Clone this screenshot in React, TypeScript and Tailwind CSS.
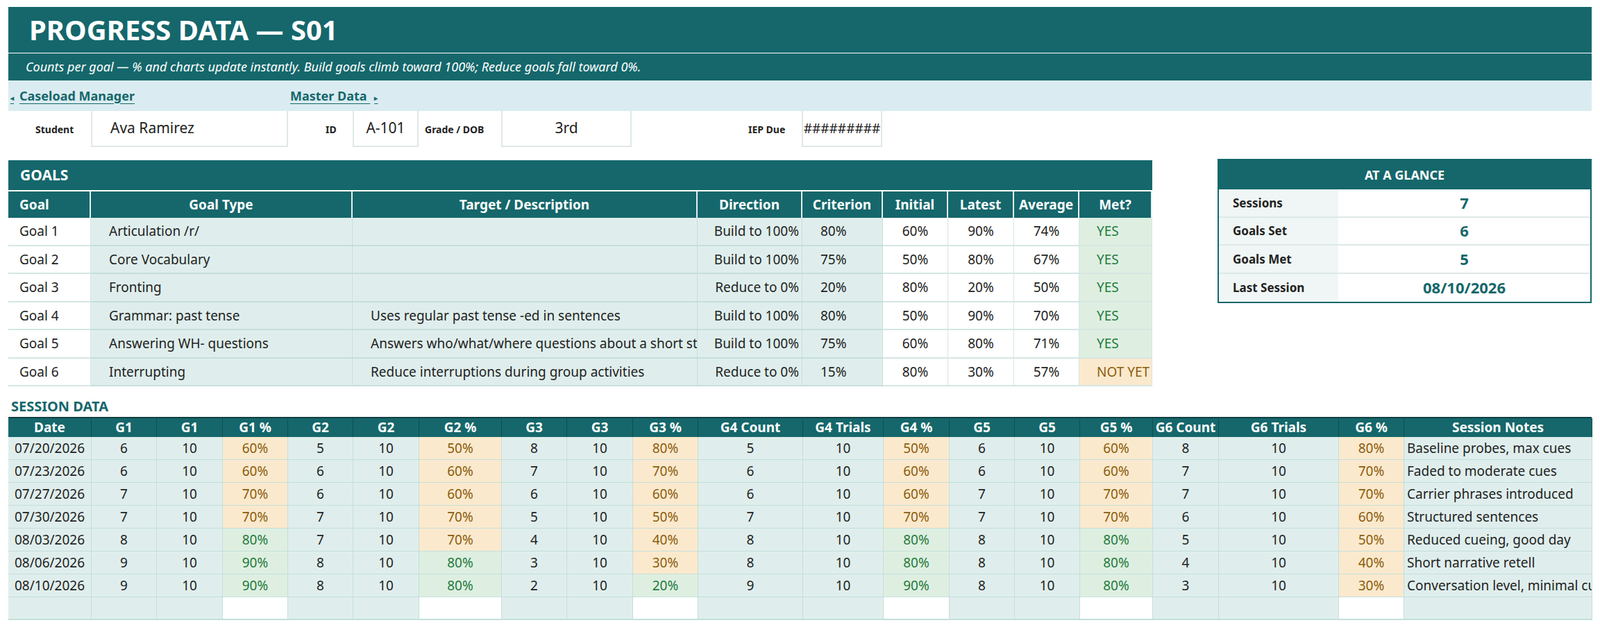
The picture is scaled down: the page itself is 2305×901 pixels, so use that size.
const FONT = "font-['Liberation_Sans_Narrow','DejaVu_Sans_Condensed','Liberation_Sans',sans-serif]";

type Goal = {
  goal: string;
  type: string;
  target: string;
  dir: string;
  crit: string;
  init: string;
  latest: string;
  avg: string;
  met: boolean;
};

const goals: Goal[] = [
  { goal: "Goal 1", type: "Articulation /r/", target: "", dir: "Build to 100%", crit: "80%", init: "60%", latest: "90%", avg: "74%", met: true },
  { goal: "Goal 2", type: "Core Vocabulary", target: "", dir: "Build to 100%", crit: "75%", init: "50%", latest: "80%", avg: "67%", met: true },
  { goal: "Goal 3", type: "Fronting", target: "", dir: "Reduce to 0%", crit: "20%", init: "80%", latest: "20%", avg: "50%", met: true },
  { goal: "Goal 4", type: "Grammar: past tense", target: "Uses regular past tense -ed in sentences", dir: "Build to 100%", crit: "80%", init: "50%", latest: "90%", avg: "70%", met: true },
  { goal: "Goal 5", type: "Answering WH- questions", target: "Answers who/what/where questions about a short story", dir: "Build to 100%", crit: "75%", init: "60%", latest: "80%", avg: "71%", met: true },
  { goal: "Goal 6", type: "Interrupting", target: "Reduce interruptions during group activities", dir: "Reduce to 0%", crit: "15%", init: "80%", latest: "30%", avg: "57%", met: false },
];

const sessionHeaders = [
  "Date", "G1", "G1", "G1 %", "G2", "G2", "G2 %", "G3", "G3", "G3 %",
  "G4 Count", "G4 Trials", "G4 %", "G5", "G5", "G5 %", "G6 Count", "G6 Trials", "G6 %", "Session Notes",
];

// [date, g1c, g2c, g3c, g4c, g5c, g6c, notes]
const sessions: [string, number, number, number, number, number, number, string][] = [
  ["07/20/2026", 6, 5, 8, 5, 6, 8, "Baseline probes, max cues"],
  ["07/23/2026", 6, 6, 7, 6, 6, 7, "Faded to moderate cues"],
  ["07/27/2026", 7, 6, 6, 6, 7, 7, "Carrier phrases introduced"],
  ["07/30/2026", 7, 7, 5, 7, 7, 6, "Structured sentences"],
  ["08/03/2026", 8, 7, 4, 8, 8, 5, "Reduced cueing, good day"],
  ["08/06/2026", 9, 8, 3, 8, 8, 4, "Short narrative retell"],
  ["08/10/2026", 9, 8, 2, 9, 8, 3, "Conversation level, minimal cues"],
];

// criterion + direction per goal, used for cell colour
const rules = [
  { crit: 80, build: true },
  { crit: 75, build: true },
  { crit: 20, build: false },
  { crit: 80, build: true },
  { crit: 75, build: true },
  { crit: 15, build: false },
];

const SESSION_GRID =
  "grid grid-cols-[120px_94px_95px_94px_94px_95px_119px_94px_95px_94px_151px_116px_95px_94px_94px_105px_95px_173px_94px_271px]";
const GOAL_GRID = "grid grid-cols-[119px_377px_497px_151px_116px_94px_95px_94px_105px]";

function PctCell({ value, goal }: { value: number; goal: number }) {
  const r = rules[goal];
  const ok = r.build ? value >= r.crit : value <= r.crit;
  return (
    <div
      className={`flex items-center justify-center border-r border-b border-[#c4dfdb] ${
        ok ? "bg-[#deefe1] text-[#1f7a3c]" : "bg-[#fbe9cd] text-[#8a5c0c]"
      }`}
    >
      {value}%
    </div>
  );
}

function Cell({ children, className = "" }: { children?: React.ReactNode; className?: string }) {
  return (
    <div className={`flex items-center justify-center border-r border-b border-[#c4dfdb] bg-[#dfeeec] ${className}`}>
      {children}
    </div>
  );
}

export default function App() {
  return (
    <div className={`w-[2305px] h-[901px] bg-white text-[#222] ${FONT}`}>
      <div className="pl-[12px] pr-[12px] pt-[10px]">
        {/* title */}
        <div className="h-[66px] bg-[#15676b] flex items-center pl-[30px] text-white text-[40px] font-bold">
          PROGRESS DATA — S01
        </div>
        <div className="mt-[1px] h-[39px] bg-[#15676b] flex items-center pl-[25px] text-white text-[18px] italic">
          Counts per goal — % and charts update instantly. Build goals climb toward 100%; Reduce goals fall toward 0%.
        </div>
        {/* nav */}
        <div className="h-[44px] bg-[#daecf1] flex items-center text-[#15676b] text-[18px] font-bold">
          <span className="ml-[3px] w-[403px] underline underline-offset-4">
            <span className="text-[10px] mr-[8px] no-underline">◂</span>Caseload Manager
          </span>
          <span className="underline underline-offset-4">
            Master Data <span className="text-[10px] ml-[6px]">▸</span>
          </span>
        </div>
        {/* student row */}
        <div className="h-[52px] flex items-stretch text-[14px] font-bold">
          <div className="w-[119px] flex items-center pl-[39px]">Student</div>
          <div className="w-[284px] border-2 border-t-0 border-[#e0e8e7] flex items-center pl-[26px] text-[21px] font-normal">
            Ava Ramirez
          </div>
          <div className="w-[93px] flex items-center pl-[54px]">ID</div>
          <div className="w-[95px] border-2 border-t-0 border-[#e0e8e7] flex items-center justify-center text-[21px] font-normal">
            A-101
          </div>
          <div className="w-[119px] flex items-center pl-[9px]">Grade / DOB</div>
          <div className="w-[188px] border-2 border-t-0 border-[#e0e8e7] flex items-center justify-center text-[21px] font-normal">
            3rd
          </div>
          <div className="w-[245px] flex items-center pl-[168px]">IEP Due</div>
          <div className="w-[116px] border-2 border-t-0 border-[#e0e8e7] flex items-center justify-center text-[19px] font-normal">
            #########
          </div>
        </div>

        {/* goals + glance */}
        <div className="mt-[19px] flex items-start">
          <div className="w-[1648px]">
            <div className="h-[43px] bg-[#15676b] flex items-center pl-[17px] text-white text-[21px] font-bold">
              GOALS
            </div>
            <div className={`${GOAL_GRID} mt-[2px] h-[38px] bg-[#15676b] text-white text-[19px] font-bold`}>
              {["Goal", "Goal Type", "Target / Description", "Direction", "Criterion", "Initial", "Latest", "Average", "Met?"].map(
                (h, i) => (
                  <div
                    key={i}
                    className={`flex items-center border-r-2 border-[#e6f0ef] ${i === 0 ? "pl-[16px]" : "justify-center"}`}
                  >
                    {h}
                  </div>
                )
              )}
            </div>
            {goals.map((g) => (
              <div key={g.goal} className={`${GOAL_GRID} h-[40.5px] text-[19px]`}>
                <div className="flex items-center pl-[16px] bg-white border-r border-b-2 border-[#d5e6e4]">{g.goal}</div>
                <div className="flex items-center pl-[26px] bg-[#dfeeec] border-r border-b-2 border-[#c4dfdb]">{g.type}</div>
                <div className="flex items-center pl-[26px] bg-[#dfeeec] border-r border-b-2 border-[#c4dfdb] overflow-hidden whitespace-nowrap">
                  {g.target}
                </div>
                <div className="flex items-center justify-end pr-[4px] bg-[#dfeeec] border-r border-b-2 border-[#c4dfdb]">{g.dir}</div>
                <div className="flex items-center pl-[26px] bg-[#dfeeec] border-r border-b-2 border-[#c4dfdb]">{g.crit}</div>
                <div className="flex items-center justify-center bg-white border-r border-b-2 border-[#d5e6e4]">{g.init}</div>
                <div className="flex items-center justify-center bg-white border-r border-b-2 border-[#d5e6e4]">{g.latest}</div>
                <div className="flex items-center justify-center bg-white border-r border-b-2 border-[#d5e6e4]">{g.avg}</div>
                <div
                  className={`flex items-center pl-[25px] border-r border-b-2 border-[#d5e6e4] whitespace-nowrap ${
                    g.met ? "bg-[#deefe1] text-[#1f7a3c]" : "bg-[#fbe9cd] text-[#8a5c0c] pl-[23px]"
                  }`}
                >
                  {g.met ? "YES" : "NOT YET"}
                </div>
              </div>
            ))}
          </div>

          <div className="ml-[94px] mt-[-2px] w-[539px] border-2 border-[#15676b]">
            <div className="h-[42px] bg-[#15676b] flex items-center justify-center text-white text-[18px] font-bold">
              AT A GLANCE
            </div>
            {[
              ["Sessions", "7"],
              ["Goals Set", "6"],
              ["Goals Met", "5"],
              ["Last Session", "08/10/2026"],
            ].map(([l, v], i) => (
              <div key={l} className={`flex h-[40.5px] ${i < 3 ? "border-b-2 border-[#dde9e7]" : ""}`}>
                <div className="w-[172px] bg-[#f0f6f5] flex items-center pl-[20px] text-[17px] font-bold">{l}</div>
                <div className="flex-1 flex items-center justify-center text-[#15676b] text-[22px] font-bold bg-white">{v}</div>
              </div>
            ))}
          </div>
        </div>

        {/* session data */}
        <div className="mt-[17px] h-[23px] pl-[4px] text-[#15676b] text-[20px] font-bold leading-[23px]">SESSION DATA</div>
        <div className="mt-[4px] border-t-2 border-[#0f3f42]">
          <div className={`${SESSION_GRID} h-[27px] bg-[#15676b] text-white text-[19px] font-bold`}>
            {sessionHeaders.map((h, i) => (
              <div key={i} className="flex items-center justify-center border-r border-[#0f4f52] whitespace-nowrap overflow-hidden">
                {h}
              </div>
            ))}
          </div>
          {sessions.map((s) => {
            const [date, c1, c2, c3, c4, c5, c6, notes] = s;
            const counts = [c1, c2, c3, c4, c5, c6];
            return (
              <div key={date} className={`${SESSION_GRID} h-[33px] text-[19px]`}>
                <Cell>{date}</Cell>
                {counts.map((c, gi) => [
                  <Cell key={`c${gi}`}>{c}</Cell>,
                  <Cell key={`t${gi}`}>10</Cell>,
                  <PctCell key={`p${gi}`} value={c * 10} goal={gi} />,
                ])}
                <Cell className="!justify-start pl-[4px] whitespace-nowrap overflow-hidden">{notes}</Cell>
              </div>
            );
          })}
          <div className={`${SESSION_GRID} h-[33px]`}>
            {sessionHeaders.map((h, i) =>
              h.includes("%") ? (
                <div key={i} className="bg-white border-r border-b-2 border-[#c4dfdb]" />
              ) : (
                <div key={i} className="bg-[#dfeeec] border-r border-b-2 border-[#c4dfdb]" />
              )
            )}
          </div>
        </div>
      </div>
    </div>
  );
}
